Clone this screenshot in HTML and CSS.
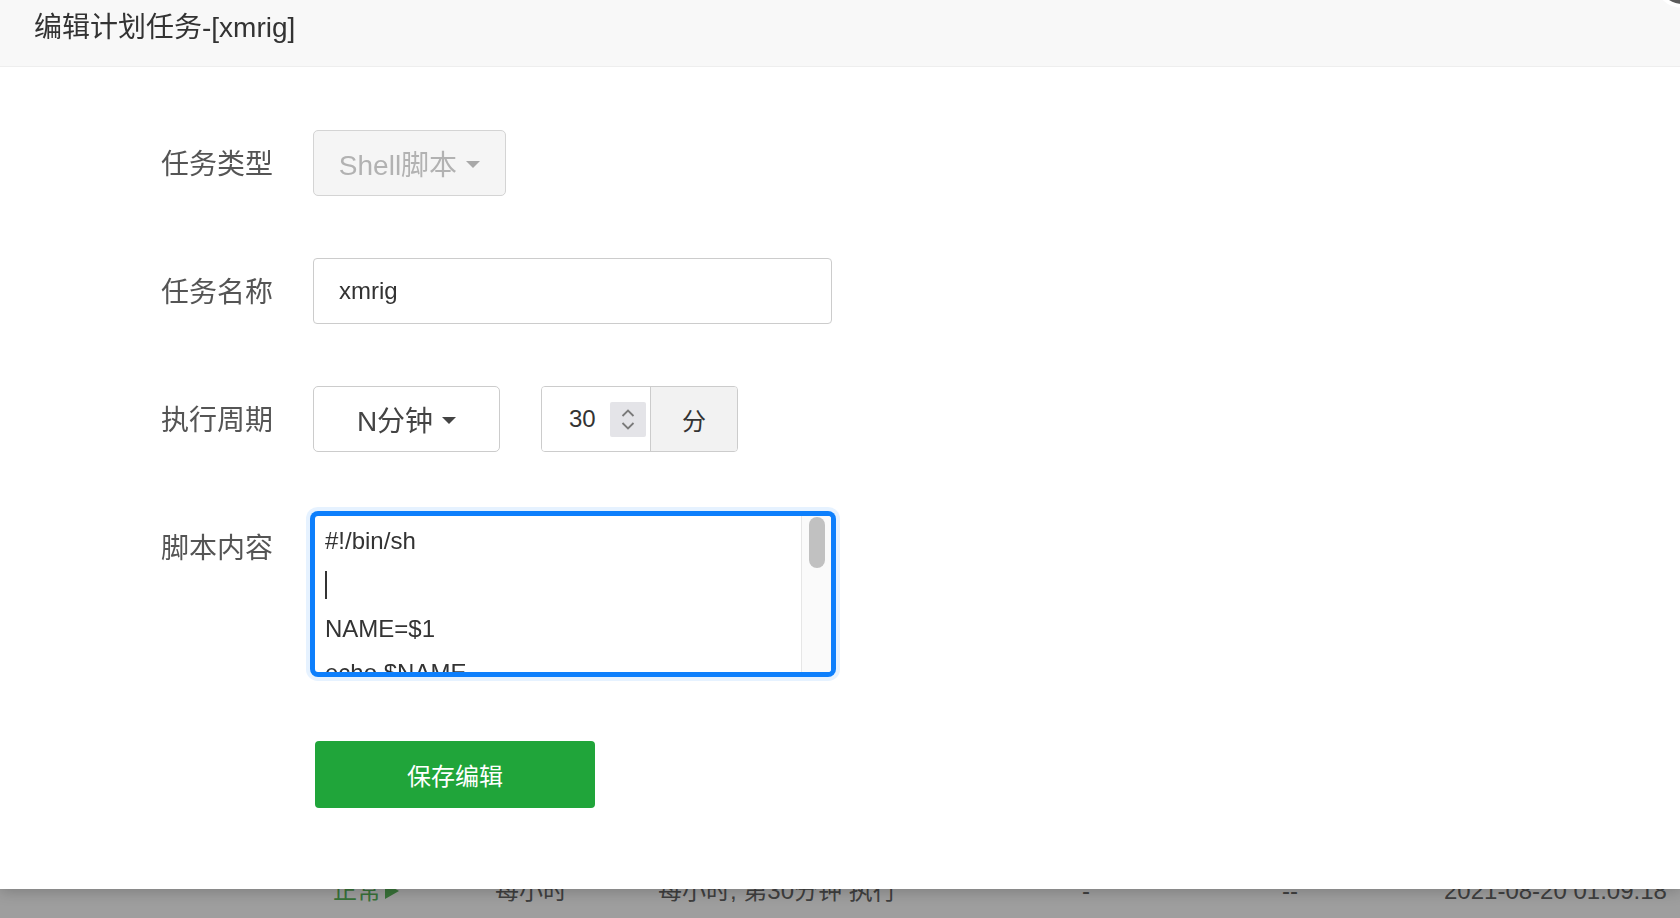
FILE: index.html
```html
<!DOCTYPE html>
<html lang="zh-CN">
<head>
<meta charset="utf-8">
<title>编辑计划任务</title>
<link rel="stylesheet" href="styles.css">
</head>
<body>
<div class="page">
  <div class="list-row">
    <span class="ok">正常<svg class="play" width="14" height="16" viewBox="0 0 14 16"><polygon points="0,0 14,8 0,16" fill="#5cb85c"/></svg></span>
    <span>每小时</span>
    <span>每小时, 第30分钟 执行</span>
    <span>-</span>
    <span>--</span>
    <span>2021-08-20 01:09:18</span>
  </div>
</div>
<div class="shade"></div>
<div class="dialog">
  <div class="dlg-title">编辑计划任务-[xmrig]</div>
  <span class="dlg-close"></span>
  <form class="form">
    <div class="row">
      <label class="lbl">任务类型</label>
      <div class="select disabled"><span>Shell脚本</span><i class="caret"></i></div>
    </div>
    <div class="row">
      <label class="lbl">任务名称</label>
      <input class="input" type="text" value="xmrig">
    </div>
    <div class="row">
      <label class="lbl">执行周期</label>
      <div class="select cycle"><span>N分钟</span><i class="caret"></i></div>
      <div class="num-group">
        <div class="num">
          <span>30</span>
          <span class="spin"><svg width="36" height="35" viewBox="0 0 36 35"><polyline points="12.5,14 18,8.5 23.5,14" fill="none" stroke="#7a7a7a" stroke-width="1.8"/><polyline points="12.5,21 18,26.5 23.5,21" fill="none" stroke="#7a7a7a" stroke-width="1.8"/></svg></span>
        </div>
        <div class="unit">分</div>
      </div>
    </div>
    <div class="row row-top">
      <label class="lbl">脚本内容</label>
      <div class="editor">
        <div class="code">
          <div class="line">#!/bin/sh</div>
          <div class="line"><span class="cursor"></span></div>
          <div class="line">NAME=$1</div>
          <div class="line">echo $NAME</div>
          <div class="line">echo $ID</div>
        </div>
        <div class="vscroll"><div class="thumb"></div></div>
      </div>
    </div>
    <div class="actions">
      <button class="btn-save" type="button">保存编辑</button>
    </div>
  </form>
</div>
</body>
</html>
```

FILE: styles.css
```css
* { box-sizing: border-box; }
html, body { margin: 0; padding: 0; }
body {
  width: 1680px;
  height: 918px;
  overflow: hidden;
  position: relative;
  background: #fff;
  font-family: "Liberation Sans", "Noto Sans CJK SC", sans-serif;
}

/* underlying page */
.page { padding-top: 873px; }
.list-row {
  display: grid;
  grid-template-columns: 162px 163px 424px 200px 162px auto;
  padding-left: 333px;
  font-size: 24px;
  line-height: 36px;
  color: #666;
  white-space: nowrap;
}
.ok { color: #5cb85c; display: flex; align-items: center; gap: 4px; }
.play { display: block; }

.shade {
  position: fixed;
  left: 0; top: 0; right: 0; bottom: 0;
  background: rgba(0, 0, 0, 0.38);
}

/* dialog */
.dialog {
  position: absolute;
  left: 0;
  top: 0;
  width: 1680px;
  height: 889px;
  background: #fff;
  box-shadow: 0 2px 14px rgba(0, 0, 0, 0.22);
}
.dlg-title {
  height: 67px;
  padding-left: 34px;
  line-height: 56px;
  font-size: 28px;
  color: #333;
  background: #f8f8f8;
  border-bottom: 1px solid #eee;
}
.dlg-close {
  position: absolute;
  left: 1653px;
  top: -52px;
  width: 60px;
  height: 60px;
  border-radius: 50%;
  background: #5a5a5a;
  border: 4px solid #fff;
}

.form { padding: 63px 0 0 161px; }
.row {
  display: flex;
  align-items: center;
  margin-bottom: 62px;
}
.row-top { align-items: flex-start; }
.lbl {
  flex: none;
  width: 152px;
  height: 66px;
  font-size: 28px;
  line-height: 70px;
  color: #555;
}

.select {
  height: 66px;
  display: flex;
  align-items: center;
  justify-content: center;
  gap: 9px;
  border: 1px solid #ccc;
  border-radius: 5px;
  font-size: 28px;
  color: #444;
  background: #fff;
}
.select.disabled {
  width: 193px;
  background: #f5f5f5;
  color: #b2b2b2;
  border-color: #d4d4d4;
}
.select.cycle { width: 187px; }
.caret {
  width: 0;
  height: 0;
  border-left: 7px solid transparent;
  border-right: 7px solid transparent;
  border-top: 7px solid currentColor;
  margin-top: 3px;
}
.select.disabled .caret { border-top-color: #a8a8a8; }

.input {
  width: 519px;
  height: 66px;
  border: 1px solid #ccc;
  border-radius: 4px;
  padding: 0 0 0 25px;
  font-family: inherit;
  font-size: 24px;
  color: #333;
  background: #fff;
  outline: none;
}

.num-group {
  margin-left: 41px;
  height: 66px;
  display: flex;
  border: 1px solid #ccc;
  border-radius: 4px;
  overflow: hidden;
}
.num {
  width: 108px;
  display: flex;
  align-items: center;
  padding-left: 27px;
  font-size: 24px;
  color: #333;
  background: #fff;
}
.spin {
  margin-left: auto;
  margin-right: 4px;
  width: 36px;
  height: 35px;
  background: #e4e4e8;
  border-radius: 2px;
}
.spin svg { display: block; }
.unit {
  width: 87px;
  border-left: 1px solid #ccc;
  background: #f2f2f2;
  display: flex;
  align-items: center;
  justify-content: center;
  font-size: 24px;
  color: #333;
}

.editor {
  width: 520px;
  height: 160px;
  display: flex;
  border: 2px solid #0d7ffc;
  border-radius: 5px;
  box-shadow: 0 0 0 3px #0d7ffc, 0 0 0 7px rgba(13, 127, 252, 0.1);
  overflow: hidden;
  background: #fff;
}
.code {
  flex: 1;
  min-width: 0;
  overflow: hidden;
  padding: 3px 0 0 10px;
  font-size: 24px;
  line-height: 44px;
  color: #333;
  white-space: nowrap;
}
.vscroll {
  flex: none;
  width: 30px;
  background: #fafafa;
  border-left: 1px solid #e6e6e6;
  padding: 1px 6px 0 7px;
}
.thumb {
  height: 51px;
  background: #c1c1c1;
  border-radius: 8px;
}
.line { height: 44px; }
.cursor {
  display: inline-block;
  width: 2px;
  height: 28px;
  background: #333;
  vertical-align: middle;
  margin-top: -4px;
}

.actions { padding-left: 154px; padding-top: 5px; }
.btn-save {
  width: 280px;
  height: 67px;
  border: 0;
  border-radius: 4px;
  background: #20a53a;
  color: #fff;
  font-family: inherit;
  font-size: 24px;
}
```
